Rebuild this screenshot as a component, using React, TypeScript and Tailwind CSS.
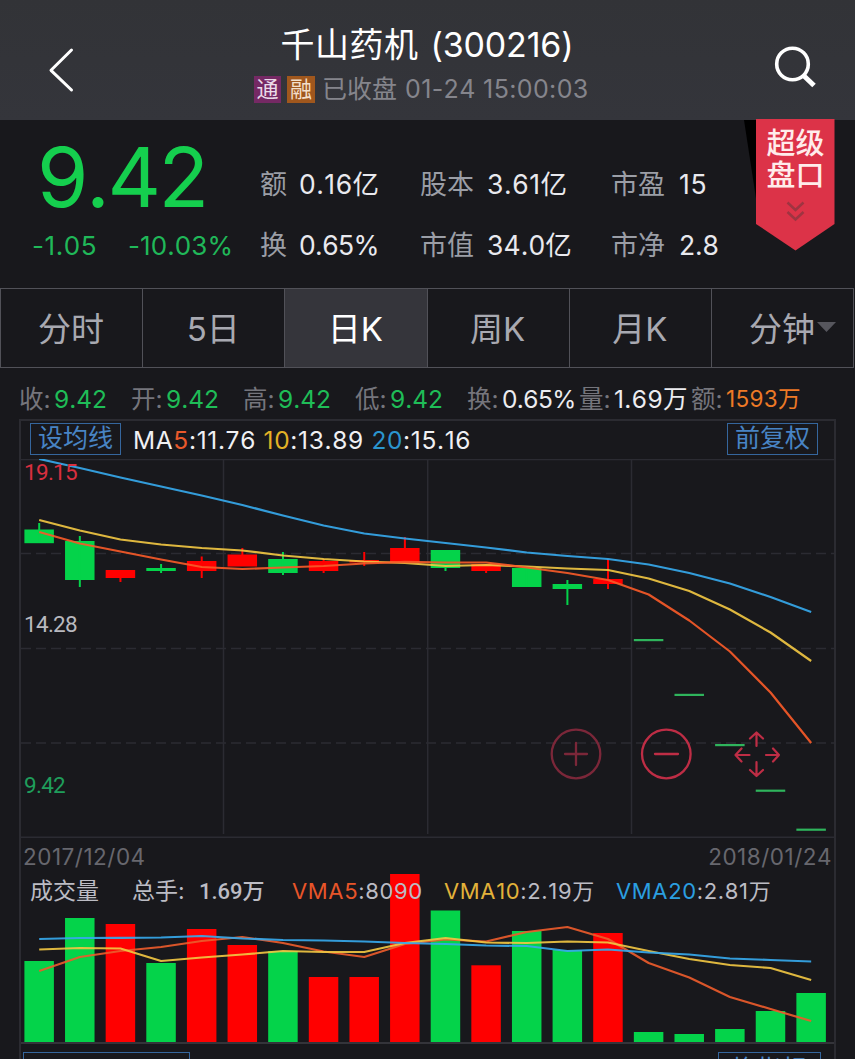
import React from "react";

const UP = "#ff0000";
const DOWN = "#04d34a";

const centerX = (i: number) => 39.2 + i * 40.63;

type Candle = { top: number; bottom: number; high: number; low: number; color: string };

const candles: Candle[] = [
  { top: 529.5, bottom: 543.2, high: 523, low: 543, color: DOWN },
  { top: 541, bottom: 580, high: 536, low: 587, color: DOWN },
  { top: 570, bottom: 578, high: 570, low: 582, color: UP },
  { top: 568, bottom: 571, high: 564, low: 573, color: DOWN },
  { top: 561, bottom: 571, high: 556.5, low: 578, color: UP },
  { top: 554.5, bottom: 566.5, high: 548, low: 566, color: UP },
  { top: 559, bottom: 573, high: 552, low: 575, color: DOWN },
  { top: 561, bottom: 571, high: 559, low: 573, color: UP },
  { top: 560, bottom: 562.5, high: 552, low: 566, color: UP },
  { top: 548, bottom: 562, high: 537, low: 562, color: UP },
  { top: 550, bottom: 568, high: 550, low: 571, color: DOWN },
  { top: 564, bottom: 571, high: 564, low: 573, color: UP },
  { top: 568, bottom: 587, high: 568, low: 587, color: DOWN },
  { top: 584, bottom: 589, high: 580, low: 605, color: DOWN },
  { top: 579, bottom: 584, high: 559, low: 589, color: UP },
  { top: 639, bottom: 641.2, high: 639, low: 641, color: "#2fb45c" },
  { top: 693.8, bottom: 696, high: 694, low: 696, color: "#2fb45c" },
  { top: 744, bottom: 746.2, high: 744, low: 746, color: "#2fb45c" },
  { top: 789.6, bottom: 791.8, high: 790, low: 791, color: "#2fb45c" },
  { top: 828.6, bottom: 830.8, high: 829, low: 830, color: "#2fb45c" },
];

const ma5 = [532, 543.5, 551.5, 559.5, 567, 569, 567.5, 566, 563.5, 561.8, 562.5, 562.5, 567.5, 573, 580, 594.5, 620.5, 651.5, 692.5, 743];
const ma10 = [520, 530.5, 539.5, 544.5, 548, 550.5, 555.5, 559, 561.5, 563, 566, 565, 566.5, 568.5, 570, 578.5, 591, 609.5, 632.5, 661];
const ma20 = [459, 468, 477.5, 486.5, 495.5, 505, 515.5, 525.5, 533.5, 538.5, 543, 547.5, 552.5, 556, 559, 564.5, 573, 583.5, 597, 612];

const volumes: [number, string][] = [
  [961, DOWN], [918, DOWN], [924, UP], [963, DOWN], [929, UP], [945, UP], [951, DOWN], [977, UP], [977, UP], [874, UP],
  [910.5, DOWN], [965.3, UP], [931, DOWN], [950, DOWN], [933, UP], [1032, DOWN], [1034, DOWN], [1029, DOWN], [1011, DOWN], [993, DOWN],
];
const vma5 = [971, 957, 951, 947, 941, 937, 943, 951.5, 957, 944, 939.5, 941.5, 932, 927, 939, 963, 977.5, 997, 1009, 1021];
const vma10 = [949.5, 948, 948.5, 961, 957.5, 954.5, 951, 952, 952, 943, 938, 942.5, 943, 941.5, 942.5, 951, 959, 965, 968, 980];
const vma20 = [939, 938, 937.8, 937.5, 936, 938.5, 940, 940.5, 941.5, 943, 944, 945.5, 946, 951, 949.5, 952.5, 954.5, 958.5, 960, 961.5];

const toPoints = (ys: number[]) => ys.map((y, i) => `${centerX(i)},${y}`).join(" ");

function Line({ ys, color }: { ys: number[]; color: string }) {
  return <polyline points={toPoints(ys)} fill="none" stroke={color} strokeWidth="2.2" strokeLinejoin="round" opacity="0.92" />;
}

function Header() {
  return (
    <header className="flex h-[120px] items-start bg-linear-to-b from-[#323337] to-[#34353b]">
      <button className="mt-[46px] ml-[46px] h-12 w-[60px]" aria-label="返回">
        <svg width="32" height="48" viewBox="0 0 32 48" fill="none" stroke="#fff" strokeWidth="3" strokeLinecap="round">
          <path d="M25.500 4L5 24.300L25.500 44" strokeLinejoin="round" />
        </svg>
      </button>
      <div className="ml-[121px] flex w-[400px] flex-col items-center">
        <h1 className="mt-[19px] flex h-[50px] items-center text-[34px] whitespace-nowrap text-white">
          <span className="tracking-[0.5px]">千山药机</span>
          <span className="ml-[12px] text-[34px] tracking-[-0.2px]">(300216)</span>
        </h1>
        <div className="mt-[5px] flex h-[30px] items-center self-start pl-[27px] text-[25px] whitespace-nowrap text-[#85858c]">
          <span className="flex h-[27px] w-[27px] items-center justify-center bg-[#752964] text-[22px] text-[#eadbe8]">通</span>
          <span className="ml-[6px] flex h-[27px] w-[28px] items-center justify-center bg-[#a0571d] text-[22px] text-[#f3dfcb]">融</span>
          <span className="ml-[7px] pt-px">已收盘</span>
          <span className="ml-[8px] pt-px tracking-[0.37px]">01-24 15:00:03</span>
        </div>
      </div>
      <button className="mt-[42px] mr-[36px] ml-auto h-12 w-12" aria-label="搜索">
        <svg width="48" height="50" viewBox="0 0 48 50" fill="none" stroke="#fff">
          <circle cx="21.500" cy="22" r="15.800" strokeWidth="3.600" />
          <path d="M32 33L43 43.500" strokeWidth="5" />
        </svg>
      </button>
    </header>
  );
}

function Metric({ label, value, labelWidth, tracking }: { label: string; value: string; labelWidth: string; tracking: string }) {
  return (
    <div className="flex h-[61px] items-center whitespace-nowrap">
      <span className={`${labelWidth} pt-[2px] text-[27px] text-[#9b9ea6]`}>{label}</span>
      <span className={`text-[26.500px] text-[#e9e9ee] ${tracking}`}>{value}</span>
    </div>
  );
}

function Quote() {
  return (
    <section className="relative flex h-[168px]">
      <div className="w-[260px] text-[#15cf4e]">
        <div className="mt-[9px] ml-[37px] flex h-[96px] items-center text-[83px] tracking-[-2.5px]">9.42</div>
        <div className="flex h-[40px] items-center text-[26px] text-[#20b859]">
          <span className="ml-[32px] w-[96px] tracking-[0.6px]">-1.05</span>
          <span className="tracking-[0.1px]">-10.03%</span>
        </div>
      </div>
      <div className="mt-[34px] w-[160px]">
        <Metric label="额" value="0.16亿" labelWidth="w-[39px]" tracking="tracking-[0.5px]" />
        <Metric label="换" value="0.65%" labelWidth="w-[39px]" tracking="tracking-[-0.6px]" />
      </div>
      <div className="mt-[34px] w-[191px]">
        <Metric label="股本" value="3.61亿" labelWidth="w-[67px]" tracking="tracking-[0.6px]" />
        <Metric label="市值" value="34.0亿" labelWidth="w-[67px]" tracking="tracking-[0.1px]" />
      </div>
      <div className="mt-[34px]">
        <Metric label="市盈" value="15" labelWidth="w-[68px]" tracking="tracking-[0.6px]" />
        <Metric label="市净" value="2.8" labelWidth="w-[68px]" tracking="tracking-[-0.2px]" />
      </div>
      <div className="absolute -top-px left-[743px] h-[132px] w-[93px]">
        <svg className="absolute inset-0" width="93" height="132" viewBox="0 0 93 132">
          <path d="M1 1H14V86Z" fill="#000" />
          <path d="M13 0H91.500V105L52.500 131.500L13 105Z" fill="#dc3348" />
          <g fill="none" stroke="#9f3441" strokeWidth="2.500">
            <path d="M44.500 83.500L52.500 91L60.500 83.500M44.500 93L52.500 100.500L60.500 93" />
          </g>
        </svg>
        <div className="relative ml-[13px] flex w-[79px] flex-col items-center pt-[9px] text-[29px] leading-[32px] font-medium text-[#ffeceb]">
          <span>超级</span>
          <span>盘口</span>
        </div>
      </div>
    </section>
  );
}

const tabs = ["分时", "5日", "日K", "周K", "月K", "分钟"];

function Tabs() {
  return (
    <nav className="mr-px flex h-[80px] border border-[#515158] text-[33px] text-[#a8a9b1]">
      {tabs.map((tab, i) => (
        <button
          key={tab}
          className={`relative flex flex-1 items-center justify-center pt-[4px] pr-px ${i > 0 ? "border-l border-[#515158]" : ""} ${i === 2 ? "bg-[#35353b] text-white" : ""}`}
        >
          {tab}
          {i === 5 && (
            <svg className="absolute top-[33px] right-[17px]" width="19" height="11" viewBox="0 0 19 11">
              <path d="M0 0H19L9.500 10Z" fill="#56565d" />
            </svg>
          )}
        </button>
      ))}
    </nav>
  );
}

const bar = [
  { label: "收", value: "9.42", style: "text-[#1fbd57]" },
  { label: "开", value: "9.42", style: "text-[#1fbd57]" },
  { label: "高", value: "9.42", style: "text-[#1fbd57]" },
  { label: "低", value: "9.42", style: "text-[#1fbd57]" },
  { label: "换", value: "0.65%", style: "text-[#ececf0] tracking-[-0.6px]" },
  { label: "量", value: "1.69万", style: "text-[#ececf0] tracking-[0.4px]" },
  { label: "额", value: "1593万", style: "text-[#ee7a26] text-[22.500px] tracking-[0.3px]" },
];

function PriceBar() {
  return (
    <div className="flex h-[51px] items-center pt-[11px] pl-[19px] text-[24.500px] whitespace-nowrap">
      {bar.map((item) => (
        <div key={item.label} className="flex w-[112px] shrink-0 items-center">
          <span className="w-[35px] text-[#75757c]">{item.label}:</span>
          <span className={item.style}>{item.value}</span>
        </div>
      ))}
    </div>
  );
}

function PriceChart() {
  return (
    <div className="relative h-[379px]">
      <svg className="block" width="813" height="379" viewBox="21 459 813 379">
        <g stroke="#2b2b32" strokeWidth="1.500">
          <path d="M21 459.500H834M21 837.200H834M223.500 460V834M427.700 460V834M631.500 460V834" />
          <path d="M21 553.500H834M21 648.500H834M21 743H834" strokeDasharray="10 5" />
        </g>
        {candles.map((c, i) => (
          <g key={i} fill={c.color}>
            <rect x={centerX(i) - 14.8} y={c.top} width="29.500" height={c.bottom - c.top} />
            <rect x={centerX(i) - 1} y={c.high} width="2" height={c.low - c.high} />
          </g>
        ))}
        <Line ys={ma20} color="#36a8ea" />
        <Line ys={ma10} color="#f0c542" />
        <Line ys={ma5} color="#f65a28" />
      </svg>
      <div className="absolute top-0 left-[3px] h-full font-['Roboto'] text-[22.500px] tracking-[-0.7px]">
        <div className="absolute top-[-2px] leading-[30px] font-[450] text-[#d82f3f]">19.15</div>
        <div className="absolute top-[150px] leading-[30px] font-[450] text-[#b9b9bf]">14.28</div>
        <div className="absolute top-[311px] leading-[30px] font-[450] text-[#1f9d5b]">9.42</div>
      </div>
      <div className="absolute top-[269px] left-[529px] flex">
        <svg width="52" height="52" viewBox="0 0 52 52" fill="none" stroke="#7b2739" strokeWidth="2.300" strokeLinecap="round">
          <circle cx="26" cy="26" r="24.300" />
          <path d="M15 26H37M26 15V37" />
        </svg>
        <svg className="ml-[38px]" width="52" height="52" viewBox="0 0 52 52" fill="none" stroke="#be2d45" strokeWidth="2.300" strokeLinecap="round">
          <circle cx="26.300" cy="26" r="24.300" />
          <path d="M15 26H38" />
        </svg>
        <svg className="ml-[40px]" width="52" height="52" viewBox="0 0 52 52" fill="none" stroke="#be2d45" strokeWidth="2.200" strokeLinecap="round" strokeLinejoin="round">
          <path d="M24.500 18V5M18 10.500L24.500 4.500L31 10.500M24.500 34V47M18 42L24.500 48L31 42M17.500 27H4.500M9.500 20.500L3.500 27L9.500 33.500M34 27H47M41 20.500L47 27L41 33.500" />
        </svg>
      </div>
    </div>
  );
}

function VolumeChart() {
  return (
    <div className="relative h-[206px]">
      <svg className="block" width="813" height="206" viewBox="21 838 813 206">
        <path d="M21 1043H834" stroke="#34343a" strokeWidth="2" />
        {volumes.map(([top, color], i) => (
          <rect key={i} x={centerX(i) - 14.8} y={top} width="29.500" height={1042 - top} fill={color} />
        ))}
        <Line ys={vma5} color="#ea5b2b" />
        <Line ys={vma10} color="#f0c542" />
        <Line ys={vma20} color="#36a8ea" />
      </svg>
      <div className="absolute inset-x-0 top-0">
        <div className="flex h-[38px] items-center justify-between pr-[2px] pl-[2px] text-[22.500px] tracking-[0.5px] text-[#67676e]">
          <span>2017/12/04</span>
          <span>2018/01/24</span>
        </div>
        <div className="-mt-[2px] flex h-[34px] items-center text-[22px] whitespace-nowrap text-[#bcbcc4]">
          <span className="ml-[9px] w-[102px] text-[23px]">成交量</span>
          <span className="w-[67px] text-[23px]">总手:</span>
          <span className="w-[93px] font-['Roboto','Noto_Sans_CJK_SC'] font-medium">1.69万</span>
          <span className="w-[152px] tracking-[0.65px]"><span className="text-[#e85529]">VMA5</span>:8090</span>
          <span className="w-[172px] tracking-[0.65px]"><span className="text-[#e2b23a]">VMA10</span>:2.19万</span>
          <span className="tracking-[0.65px]"><span className="text-[#2b9fe0]">VMA20</span>:2.81万</span>
        </div>
      </div>
    </div>
  );
}

export default function App() {
  return (
    <main className="h-[1059px] w-[855px] overflow-hidden bg-[#18181c] font-['Inter','Noto_Sans_CJK_SC',sans-serif] font-[370] [font-kerning:none]">
      <Header />
      <Quote />
      <Tabs />
      <PriceBar />
      <section className="ml-[19px] h-[640px] w-[817px] border-x-2 border-t-2 border-[#2b2b31]">
        <div className="flex h-[38px] items-center text-[24.500px] whitespace-nowrap text-[#f0f0f3]">
          <button className="mt-[-2px] ml-[9px] flex h-[32px] w-[91px] items-center justify-center border border-[#35669d] text-[25px] text-[#4884c4]">设均线</button>
          <div className="ml-[12px] flex-1 pt-px tracking-[0.66px]">
            MA<span className="text-[#e9592b]">5</span>:11.76 <span className="text-[#e2b226]">10</span>:13.89 <span className="text-[#2b95cf]">20</span>:15.16
          </div>
          <button className="mt-[-2px] mr-[16px] flex h-[32px] w-[91px] items-center justify-center border border-[#35669d] text-[25px] text-[#4884c4]">前复权</button>
        </div>
        <PriceChart />
        <VolumeChart />
        <div className="flex justify-between pt-[8px] pr-[13px] pl-[2px]">
          <div className="h-[32px] w-[167px] border border-[#35669d]" />
          <div className="flex h-[32px] w-[103px] items-center justify-center border border-[#35669d] pt-[3px] text-[25px] text-[#4884c4]">换指标</div>
        </div>
      </section>
    </main>
  );
}
